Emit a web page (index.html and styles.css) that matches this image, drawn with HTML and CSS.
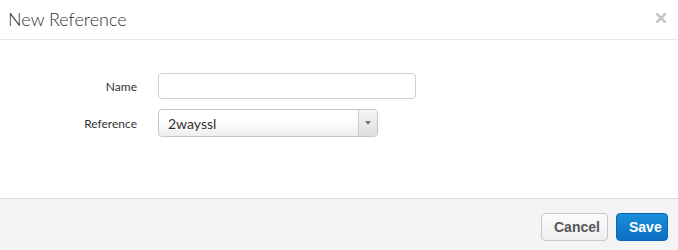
FILE: index.html
```html
<!DOCTYPE html>
<html>
<head>
<meta charset="utf-8">
<link rel="stylesheet" href="styles.css">
</head>
<body>
<div class="modal">
  <div class="modal-header">
    <h3 class="modal-title">New Reference</h3>
    <svg class="close" width="10" height="10" viewBox="0 0 10 10"><path d="M1 1L9 9M9 1L1 9" stroke="#c6c6c6" stroke-width="2.6" stroke-linecap="square"/></svg>
  </div>
  <div class="modal-body">
    <div class="form-row">
      <label class="form-label">Name</label>
      <div class="text-input"></div>
    </div>
    <div class="form-row">
      <label class="form-label">Reference</label>
      <div class="select">
        <span class="select-value">2wayssl</span>
        <span class="select-arrow"><span class="caret"></span></span>
      </div>
    </div>
  </div>
  <div class="modal-footer">
    <button class="btn btn-default">Cancel</button>
    <button class="btn btn-primary">Save</button>
  </div>
</div>
</body>
</html>
```
FILE: styles.css
```css
html, body {
  margin: 0;
  padding: 0;
  background: #fff;
}
.modal {
  width: 678px;
  height: 250px;
  display: flex;
  flex-direction: column;
  font-family: Lato, "Liberation Sans", sans-serif;
  color: #333;
}
.modal-header {
  height: 39px;
  border-bottom: 1px solid #e8e8e8;
  display: flex;
  align-items: center;
  justify-content: space-between;
  padding: 0 12px 0 8px;
  box-sizing: content-box;
}
.modal-title {
  margin: 0;
  font-weight: 300;
  font-size: 18px;
  line-height: 20px;
  color: #333;
  padding-bottom: 2px;
}
.close {
  display: block;
  margin-bottom: 3px;
}
.modal-body {
  height: 158px;
  box-sizing: border-box;
  padding-top: 33px;
  display: flex;
  flex-direction: column;
  gap: 10px;
}
.form-row {
  display: flex;
  align-items: center;
  gap: 21px;
}
.form-label {
  width: 137px;
  text-align: right;
  font-size: 12px;
  color: #333;
}
.text-input {
  width: 258px;
  height: 26px;
  box-sizing: border-box;
  border: 1px solid #cfcfcf;
  border-radius: 4px;
  background: #fff;
}
.select {
  width: 220px;
  height: 28px;
  box-sizing: border-box;
  border: 1px solid #c6c6c6;
  border-radius: 4px;
  background: linear-gradient(#ffffff 40%, #ededed);
  display: flex;
  align-items: stretch;
  overflow: hidden;
}
.select-value {
  flex: 1;
  display: flex;
  align-items: center;
  padding-left: 9px;
  font-size: 14px;
  color: #333;
}
.select-arrow {
  width: 18px;
  border-left: 1px solid #cdcdcd;
  background: linear-gradient(#f6f6f6, #dedede);
  display: flex;
  align-items: center;
  justify-content: center;
}
.caret {
  width: 0;
  height: 0;
  border-left: 3px solid transparent;
  border-right: 3px solid transparent;
  border-top: 4px solid #777;
}
.modal-footer {
  flex: 1;
  border-top: 1px solid #dcdcdc;
  background: #f4f4f4;
  display: flex;
  justify-content: flex-end;
  align-items: flex-start;
  padding: 14px 10px 0 0;
  gap: 8px;
}
.btn {
  height: 28px;
  box-sizing: border-box;
  border-radius: 4px;
  font-family: "Liberation Sans", Arial, sans-serif;
  font-weight: bold;
  font-size: 14px;
  padding: 0 12px;
  cursor: pointer;
}
.btn-default {
  width: 67px;
  border: 1px solid #c8c8c8;
  background: linear-gradient(#fbfbfb, #efefef);
  color: #555;
}
.btn-primary {
  width: 52px;
  border: 1px solid #0a66b8;
  background: linear-gradient(#1a8fd8, #0a6fc4);
  color: #fff;
}
```
